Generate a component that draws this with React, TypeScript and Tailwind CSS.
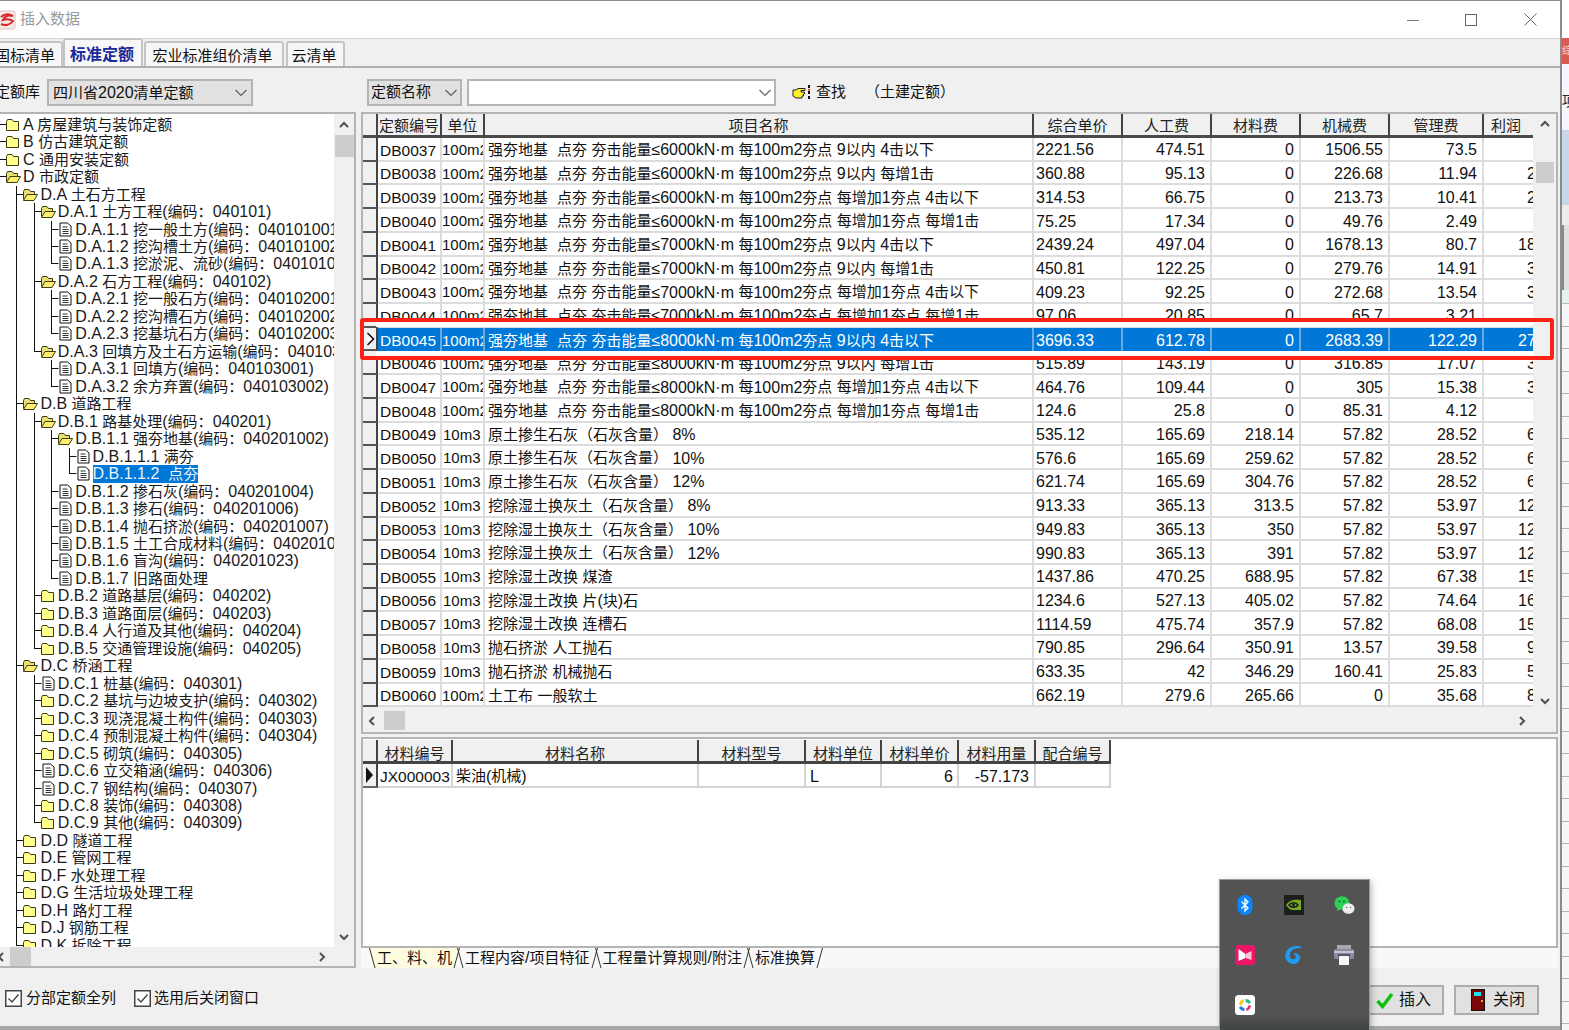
import React from "react";

const FONT = "[font-family:'Liberation_Sans','Noto_Sans_CJK_SC',sans-serif]";

function T({ s }: { s: string }) {
  return (
    <>
      {s
        .split(/([\x00-\x7f≤·]+)/)
        .filter(Boolean)
        .map((p, i) =>
          /^[\x00-\x7f≤·]/.test(p) ? (
            <span key={i} className="text-[16px]">
              {p}
            </span>
          ) : (
            <span key={i}>{p}</span>
          )
        )}
    </>
  );
}

type TreeRow = [number, "c" | "o" | "d", string];
const TREE: TreeRow[] = [
  [0, "c", "A 房屋建筑与装饰定额"],
  [0, "c", "B 仿古建筑定额"],
  [0, "c", "C 通用安装定额"],
  [0, "o", "D 市政定额"],
  [1, "o", "D.A 土石方工程"],
  [2, "o", "D.A.1 土方工程(编码：040101)"],
  [3, "d", "D.A.1.1 挖一般土方(编码：040101001)"],
  [3, "d", "D.A.1.2 挖沟槽土方(编码：040101002)"],
  [3, "d", "D.A.1.3 挖淤泥、流砂(编码：040101006)"],
  [2, "o", "D.A.2 石方工程(编码：040102)"],
  [3, "d", "D.A.2.1 挖一般石方(编码：040102001)"],
  [3, "d", "D.A.2.2 挖沟槽石方(编码：040102002)"],
  [3, "d", "D.A.2.3 挖基坑石方(编码：040102003)"],
  [2, "o", "D.A.3 回填方及土石方运输(编码：040103)"],
  [3, "d", "D.A.3.1 回填方(编码：040103001)"],
  [3, "d", "D.A.3.2 余方弃置(编码：040103002)"],
  [1, "o", "D.B 道路工程"],
  [2, "o", "D.B.1 路基处理(编码：040201)"],
  [3, "o", "D.B.1.1 强夯地基(编码：040201002)"],
  [4, "d", "D.B.1.1.1 满夯"],
  [4, "d", "D.B.1.1.2  点夯"],
  [3, "d", "D.B.1.2 掺石灰(编码：040201004)"],
  [3, "d", "D.B.1.3 掺石(编码：040201006)"],
  [3, "d", "D.B.1.4 抛石挤淤(编码：040201007)"],
  [3, "d", "D.B.1.5 土工合成材料(编码：040201010)"],
  [3, "d", "D.B.1.6 盲沟(编码：040201023)"],
  [3, "d", "D.B.1.7 旧路面处理"],
  [2, "c", "D.B.2 道路基层(编码：040202)"],
  [2, "c", "D.B.3 道路面层(编码：040203)"],
  [2, "c", "D.B.4 人行道及其他(编码：040204)"],
  [2, "c", "D.B.5 交通管理设施(编码：040205)"],
  [1, "o", "D.C 桥涵工程"],
  [2, "d", "D.C.1 桩基(编码：040301)"],
  [2, "c", "D.C.2 基坑与边坡支护(编码：040302)"],
  [2, "c", "D.C.3 现浇混凝土构件(编码：040303)"],
  [2, "c", "D.C.4 预制混凝土构件(编码：040304)"],
  [2, "c", "D.C.5 砌筑(编码：040305)"],
  [2, "d", "D.C.6 立交箱涵(编码：040306)"],
  [2, "d", "D.C.7 钢结构(编码：040307)"],
  [2, "c", "D.C.8 装饰(编码：040308)"],
  [2, "c", "D.C.9 其他(编码：040309)"],
  [1, "c", "D.D 隧道工程"],
  [1, "c", "D.E 管网工程"],
  [1, "c", "D.F 水处理工程"],
  [1, "c", "D.G 生活垃圾处理工程"],
  [1, "c", "D.H 路灯工程"],
  [1, "c", "D.J 钢筋工程"],
  [1, "c", "D.K 拆除工程"],
];

function continues(i: number, depth: number) {
  for (let j = i + 1; j < TREE.length; j++) {
    if (TREE[j][0] < depth) return false;
    if (TREE[j][0] === depth) return true;
  }
  return false;
}

function TreeLine({ i }: { i: number }) {
  const [lv, icon] = TREE[i];
  const vx = (d: number) => Math.round(-1 + 17.4 * d) + 0.5;
  const w = 23 + 17.4 * lv;
  const x = vx(lv);
  const els: React.ReactNode[] = [];
  for (let d = 1; d < lv; d++) {
    if (continues(i, d)) els.push(<line key={d} x1={vx(d)} x2={vx(d)} y1={0} y2={18} stroke="#111" />);
  }
  return (
    <svg width={w} height={18} className="shrink-0 overflow-visible">
      {els}
      <line x1={x} x2={x} y1={0} y2={continues(i, lv) ? 18 : 9} stroke="#111" />
      <line x1={x} x2={x + 7} y1={8.5} y2={8.5} stroke="#111" />
      {icon === "c" && (
        <g transform={`translate(${x + 6.5} 2)`}>
          <path d="M0.5 3.5 L1.5 1.5 H6 L7.5 3.5 H12.5 V12.5 H0.5 Z" fill="#ffff8c" stroke="#3c3c10" />
        </g>
      )}
      {icon === "o" && (
        <g transform={`translate(${x + 6.5} 2)`}>
          <path d="M0.5 11.5 V3.5 L1.5 1.5 H6 L7.5 3.5 H11.5 V6" fill="#e8e070" stroke="#3c3c10" />
          <path d="M0.5 12.5 L4 6.5 H14.5 L11 12.5 Z" fill="#ffee70" stroke="#3c3c10" />
        </g>
      )}
      {icon === "d" && (
        <g transform={`translate(${x + 8} 1.5)`}>
          <path d="M0.5 0.5 H8 L11.5 3.5 V13.5 H0.5 Z" fill="#fff" stroke="#111" />
          <path d="M3 4.5 H8 M3 7 H9 M3 9 H9 M3 11 H9" stroke="#333" />
        </g>
      )}
    </svg>
  );
}

const NAME = (e: string, tail: string) => `强夯地基  点夯 夯击能量≤${e}kN·m ${tail}`;
const A = "每100m2夯点 9以内 4击以下";
const B = "每100m2夯点 9以内 每增1击";
const C = "每100m2夯点 每增加1夯点 4击以下";
const D = "每100m2夯点 每增加1夯点 每增1击";
const S100 = "100m2";
const S10 = "10m3";

const ROWS: string[][] = [
  ["DB0037", S100, NAME("6000", A), "2221.56", "474.51", "0", "1506.55", "73.5", "  "],
  ["DB0038", S100, NAME("6000", B), "360.88", "95.13", "0", "226.68", "11.94", "26.53"],
  ["DB0039", S100, NAME("6000", C), "314.53", "66.75", "0", "213.73", "10.41", "23.13"],
  ["DB0040", S100, NAME("6000", D), "75.25", "17.34", "0", "49.76", "2.49", "5.53"],
  ["DB0041", S100, NAME("7000", A), "2439.24", "497.04", "0", "1678.13", "80.7", "183.37"],
  ["DB0042", S100, NAME("7000", B), "450.81", "122.25", "0", "279.76", "14.91", "33.89"],
  ["DB0043", S100, NAME("7000", C), "409.23", "92.25", "0", "272.68", "13.54", "30.76"],
  ["DB0044", S100, NAME("7000", D), "97.06", "20.85", "0", "65.7", "3.21", "7.3"],
  ["DB0045", S100, NAME("8000", A), "3696.33", "612.78", "0", "2683.39", "122.29", "277.87"],
  ["DB0046", S100, NAME("8000", B), "515.89", "143.19", "0", "316.85", "17.07", "38.78"],
  ["DB0047", S100, NAME("8000", C), "464.76", "109.44", "0", "305", "15.38", "34.94"],
  ["DB0048", S100, NAME("8000", D), "124.6", "25.8", "0", "85.31", "4.12", "9.37"],
  ["DB0049", S10, "原土掺生石灰（石灰含量） 8%", "535.12", "165.69", "218.14", "57.82", "28.52", "64.95"],
  ["DB0050", S10, "原土掺生石灰（石灰含量） 10%", "576.6", "165.69", "259.62", "57.82", "28.52", "64.95"],
  ["DB0051", S10, "原土掺生石灰（石灰含量） 12%", "621.74", "165.69", "304.76", "57.82", "28.52", "64.95"],
  ["DB0052", S10, "挖除湿土换灰土（石灰含量） 8%", "913.33", "365.13", "313.5", "57.82", "53.97", "122.91"],
  ["DB0053", S10, "挖除湿土换灰土（石灰含量） 10%", "949.83", "365.13", "350", "57.82", "53.97", "122.91"],
  ["DB0054", S10, "挖除湿土换灰土（石灰含量） 12%", "990.83", "365.13", "391", "57.82", "53.97", "122.91"],
  ["DB0055", S10, "挖除湿土改换 煤渣", "1437.86", "470.25", "688.95", "57.82", "67.38", "153.46"],
  ["DB0056", S10, "挖除湿土改换 片(块)石", "1234.6", "527.13", "405.02", "57.82", "74.64", "169.99"],
  ["DB0057", S10, "挖除湿土改换 连槽石", "1114.59", "475.74", "357.9", "57.82", "68.08", "155.05"],
  ["DB0058", S10, "抛石挤淤 人工抛石", "790.85", "296.64", "350.91", "13.57", "39.58", "90.15"],
  ["DB0059", S10, "抛石挤淤 机械抛石", "633.35", "42", "346.29", "160.41", "25.83", "58.82"],
  ["DB0060", S100, "土工布 一般软土", "662.19", "279.6", "265.66", "0", "35.68", "81.25"],
];

const HEAD = ["定额编号", "单位", "项目名称", "综合单价", "人工费", "材料费", "机械费", "管理费", "利润"];

function Chevron({ dir, className }: { dir: "u" | "d" | "l" | "r"; className?: string }) {
  const d = {
    u: "M2 8 L6 4 L10 8",
    d: "M2 4 L6 8 L10 4",
    l: "M8 2 L4 6 L8 10",
    r: "M4 2 L8 6 L4 10",
  }[dir];
  return (
    <svg width="12" height="12" viewBox="0 0 12 12" className={className}>
      <path d={d} fill="none" stroke="#505050" strokeWidth="2" />
    </svg>
  );
}

function SelChevron() {
  return (
    <svg width="14" height="8" viewBox="0 0 14 8" className="shrink-0">
      <path d="M1.5 1 L7 6.5 L12.5 1" fill="none" stroke="#606060" strokeWidth="1.2" />
    </svg>
  );
}

function UpperGrid() {
  return (
    <div className="flex flex-col h-[622px] border-x-2 border-t-2 border-b-2 border-[#b4b4b4] bg-[#f0f0f0]">
      <div className="flex h-[595px]">
        <div className="w-[1170px] overflow-hidden flex flex-col">
          <div className="grid grid-cols-[15px_64px_43px_549px_89px_89px_89px_89px_94px_90px] h-[24px] shrink-0 border-b-[3px] border-[#4a4a4a] bg-[#f0f0f0] text-[15px] text-[#222]">
            <div className="border-r-2 border-[#444]" />
            {HEAD.map((h) =>
              h === "利润" ? (
                <div key={h} className="flex items-center pl-[7px] pt-[1px] whitespace-nowrap">
                  {h}
                </div>
              ) : (
                <div key={h} className="border-r-2 border-[#444] flex items-center justify-center pt-[1px] whitespace-nowrap overflow-hidden">
                  {h}
                </div>
              )
            )}
          </div>
          {ROWS.map((r) => {
            const sel = r[0] === "DB0045";
            const cell = sel
              ? "border-r-2 border-[#6ea8dc] flex items-center pt-[3px] overflow-hidden whitespace-pre bg-[#0078d7] text-white"
              : "border-r-2 border-b-2 border-[#dcdcdc] flex items-center pt-[3px] overflow-hidden whitespace-pre bg-white text-[#111]";
            return (
              <div key={r[0]} className="grid grid-cols-[15px_64px_43px_549px_89px_89px_89px_89px_94px_90px] h-[23.72px] shrink-0 text-[15px]">
                <div className="border-r-2 border-b-2 border-r-[#444] border-b-[#555] bg-[#f0f0f0] flex items-center justify-end pr-px">
                  {sel && (
                    <svg width="9" height="14" viewBox="0 0 9 14">
                      <path d="M1.5 1 L7.5 7 L1.5 13" fill="#fff" stroke="#111" strokeWidth="1.6" />
                    </svg>
                  )}
                </div>
                <div className={`${cell} pl-[2px] [&>span]:text-[15.5px]`}>
                  <T s={r[0]} />
                </div>
                <div className={r[1] === S100 ? `${cell} pl-0 [&>span]:text-[15px]` : `${cell} pl-[1px] [&>span]:text-[15px]`}>
                  <T s={r[1]} />
                </div>
                <div className={`${cell} pl-[3px]`}>
                  <T s={r[2]} />
                </div>
                <div className={`${cell} pl-[2px]`}>
                  <T s={r[3]} />
                </div>
                {r.slice(4).map((v, i) => (
                  <div key={i} className={`${cell} justify-end pr-[5px]`}>
                    <T s={v} />
                  </div>
                ))}
              </div>
            );
          })}
        </div>
        <div className="flex-1 flex flex-col items-center bg-[#f0f0f0] pt-[4px]">
          <Chevron dir="u" />
          <div className="w-[18px] h-[21px] bg-[#cdcdcd] mt-[32px]" />
          <div className="flex-1" />
          <Chevron dir="d" className="mb-[2px]" />
        </div>
      </div>
      <div className="flex-1 flex items-center bg-[#f0f0f0] pl-[3px] pr-[28px]">
        <Chevron dir="l" />
        <div className="w-[21px] h-[19px] bg-[#cdcdcd] ml-[6px]" />
        <div className="flex-1" />
        <Chevron dir="r" />
      </div>
    </div>
  );
}

function LowerGrid() {
  const head = ["材料编号", "材料名称", "材料型号", "材料单位", "材料单价", "材料用量", "配合编号"];
  const cols = "grid grid-cols-[15px_75px_246px_107px_76px_77px_77px_75px] w-[748px]";
  const c = "border-r-2 border-b-2 border-[#d4d4d4] flex items-center pt-[3px] whitespace-nowrap overflow-hidden text-[#111]";
  return (
    <div className="flex-1 bg-white border-x-2 border-t-2 border-[#b4b4b4] pt-px">
      <div className={`${cols} h-[24px] border-b-[3px] border-[#444] bg-[#f0f0f0] text-[15px] text-[#222]`}>
        <div className="border-r-2 border-[#444]" />
        {head.map((h) => (
          <div key={h} className="border-r-2 border-[#444] flex items-center justify-center pt-[3px] whitespace-nowrap">
            {h}
          </div>
        ))}
      </div>
      <div className={`${cols} h-[24px] text-[15px]`}>
        <div className="border-r-2 border-b-2 border-r-[#444] border-b-[#666] bg-[#f0f0f0] flex items-center justify-center">
          <svg width="9" height="16" viewBox="0 0 9 16">
            <path d="M1 0 L8 8 L1 16 Z" fill="#111" />
          </svg>
        </div>
        <div className={`${c} pl-[2px] text-[15.5px]`}>JX000003</div>
        <div className={`${c} pl-[3px]`}>
          <T s="柴油(机械)" />
        </div>
        <div className={c} />
        <div className={`${c} pl-[4px]`}>
          <T s="L" />
        </div>
        <div className={`${c} justify-end pr-[4px]`}>
          <T s="6" />
        </div>
        <div className={`${c} justify-end pr-[5px]`}>
          <T s="-57.173" />
        </div>
        <div className={c} />
      </div>
    </div>
  );
}

function Slant({ back, active }: { back?: boolean; active?: boolean }) {
  return (
    <svg width="7" height="20" viewBox="0 0 7 20" className="shrink-0">
      {active && <path d={back ? "M0 0 H7 V20 H6 Z" : "M0 0 H7 L1 20 H0 Z"} fill="#fffbdf" />}
      <path d={back ? "M0.5 0 L6 20" : "M6.5 0 L1 20"} fill="none" stroke="#333" strokeWidth="1" />
    </svg>
  );
}

function BottomTabs() {
  const tabs = ["工、料、机", "工程内容/项目特征", "工程量计算规则/附注", "标准换算"];
  return (
    <div className="h-[22px] bg-[#f8f8f8] flex items-start pl-[8px] border-t-2 border-[#b4b4b4] text-[15px] text-[#111]">
      {tabs.map((t, i) => (
        <div key={t} className={i === 0 ? "flex items-center h-[20px]" : "flex items-center h-[20px] -ml-[3px]"}>
          <Slant back active={i === 0} />
          <div className={i === 0 ? "bg-[#fffbdf] px-[1px] whitespace-nowrap leading-[20px]" : "px-[1px] whitespace-nowrap leading-[20px]"}>
            <T s={t} />
          </div>
          <Slant active={i === 0} />
        </div>
      ))}
    </div>
  );
}

function Tray() {
  return (
    <div className="absolute left-[1219px] top-[879px] w-[151px] h-[151px] border border-b-0 border-[#9a9a9a] bg-gradient-to-b from-[#535353] from-90% to-[#3f4444] shadow-[2px_2px_6px_rgba(0,0,0,0.25)] grid grid-cols-3 grid-rows-3 place-items-center">
      <svg width="16" height="20" viewBox="0 0 16 20">
        <rect x="0.5" y="0" width="15" height="20" rx="7" fill="#0a84ff" />
        <path d="M4.5 6.5 L11 13 L8 16 V4 L11 7 L4.5 13.5" fill="none" stroke="#fff" strokeWidth="1.3" />
      </svg>
      <svg width="20" height="20" viewBox="0 0 20 20">
        <rect width="20" height="20" fill="#1c1f1c" />
        <path d="M2 10 C5 5 10 4 17 5 V15 H9 C6 15 4 13 2 10 Z" fill="#76a928" />
        <path d="M5 10 C7 7 12 7 14 10 C12 13 7 13 5 10 Z" fill="none" stroke="#1c1f1c" strokeWidth="1.5" />
        <circle cx="9.5" cy="10" r="1.5" fill="#1c1f1c" />
      </svg>
      <svg width="21" height="19" viewBox="0 0 21 19">
        <ellipse cx="8" cy="7" rx="7.5" ry="6.8" fill="#2fd058" />
        <path d="M3.5 11 L3 15 L7 13 Z" fill="#2fd058" />
        <ellipse cx="14.5" cy="12.5" rx="6" ry="5.3" fill="#eeeeee" />
        <circle cx="5.5" cy="5.5" r="1" fill="#136a2c" />
        <circle cx="10" cy="5.5" r="1" fill="#136a2c" />
        <circle cx="12.5" cy="11.5" r="0.8" fill="#777" />
        <circle cx="16.5" cy="11.5" r="0.8" fill="#777" />
      </svg>
      <svg width="20" height="20" viewBox="0 0 20 20">
        <rect width="20" height="20" rx="3.5" fill="#ee1566" />
        <path d="M3.5 4 L10.5 9 V13 L3.5 16 Z" fill="#fff" />
        <path d="M10.5 9 L16.5 6 V15 L10.5 13 Z" fill="#fbc6d8" />
      </svg>
      <svg width="20" height="20" viewBox="0 0 20 20">
        <path d="M16.5 1.5 C11 0 3 2 1.5 9 C0.5 14 4 18.5 9 19 C13 19.5 16 16 16 12.5 C16 9.5 13 7.5 9.5 8.5 L12 11.5 C12 14 9 15 7 13.5 C4.5 11.5 5.5 6 10 4 C12.5 3 15 3 18 3 Z" fill="#1e9cf0" />
      </svg>
      <svg width="20" height="20" viewBox="0 0 20 20">
        <rect x="3" y="0" width="14" height="4" fill="#a9a9b4" />
        <rect x="0" y="4" width="20" height="10" rx="2" fill="#8c8ca0" />
        <rect x="0" y="6" width="20" height="2" fill="#c4c4cc" />
        <rect x="4" y="9" width="12" height="4" fill="#55556a" />
        <rect x="5" y="11" width="10" height="9" fill="#f5f5f5" />
      </svg>
      <svg width="20" height="20" viewBox="0 0 20 20">
        <rect width="20" height="20" rx="3.5" fill="#fff" />
        <path d="M4 10 C4 7 6 4.5 8.5 4 L9 7 C7.5 7.5 7 9 7 10 Z" fill="#ffc61a" />
        <path d="M10.5 4 C13 4 15 5 16 7.5 L13.5 9 C13 8 12 7 10.5 7 Z" fill="#22c08a" />
        <path d="M16 10.5 C16 13 14 15.5 11.5 16 L11 13.5 C12.5 13 13 12 13 10.5 Z" fill="#f0335a" />
        <path d="M9.5 16 C7 16 5 15 4 12.5 L6.5 11 C7 12 8 13 9.5 13 Z" fill="#1e7cf0" />
      </svg>
      <div />
      <div />
    </div>
  );
}

function SideStrip() {
  return (
    <div className="flex-1 flex flex-col overflow-hidden">
      <div className="h-[38px] bg-white shrink-0" />
      <div className="h-[26px] bg-[#d85a50] shrink-0 text-[10px] text-[#fbd9d0] overflow-hidden leading-[26px]">综</div>
      <div className="h-[66px] bg-[#f4f8fc] shrink-0 text-[14px] text-[#222] pt-[30px] leading-[14px] whitespace-nowrap">项</div>
      <div className="h-[75px] bg-[#c8d8e8] shrink-0" />
      <div className="h-[20px] bg-[#ececec] shrink-0" />
      <div className="h-[65px] bg-[#e0e0e0] shrink-0 border-l-2 border-[#888]" />
      <div className="h-[14px] bg-[#e2f2ee] shrink-0 border-b border-[#b8b8b8]" />
      {Array.from({ length: 33 }, (_, i) => (
        <div key={i} className="h-[22.5px] shrink-0 bg-[#f6f6f6] border-b border-[#b4b4b4]" />
      ))}
    </div>
  );
}

export default function App() {
  return (
    <div className={`${FONT} relative w-[1569px] h-[1030px] flex overflow-hidden bg-white text-[15px] text-[#111]`}>
      <div className="w-[1562px] h-full flex flex-col bg-[#f0f0f0] border-t border-r-2 border-[#8c8c8c] shrink-0">
        {/* title */}
        <div className="h-[38px] shrink-0 bg-white flex items-center border-b border-[#d4d4d4]">
          <svg width="16" height="20" viewBox="0 0 16 20" className="shrink-0">
            <rect x="-2" y="1" width="17" height="18" rx="2" fill="#f6e9e6" stroke="#d8c4bc" />
            <path d="M1 7 C5 3 10 4 13 6 C9 5 5 6 3 10 C6 9 10 9 13 11 C10 15 5 16 1 14" fill="none" stroke="#d8262a" strokeWidth="2" />
          </svg>
          <span className="ml-[4px] text-[#9a9a9a]">插入数据</span>
          <div className="flex-1" />
          <svg width="12" height="2" className="mr-[46px] mt-[2px]">
            <rect width="12" height="1" fill="#777" />
          </svg>
          <svg width="12" height="12" className="mr-[47px]">
            <rect x="0.5" y="0.5" width="11" height="11" fill="none" stroke="#666" />
          </svg>
          <svg width="13" height="13" className="mr-[23px]">
            <path d="M0.5 0.5 L12.5 12.5 M12.5 0.5 L0.5 12.5" stroke="#666" />
          </svg>
        </div>
        {/* tabs */}
        <div className="h-[29px] shrink-0 flex items-end border-b-2 border-[#b0b0b0]">
          <div className="w-[72px] -ml-[9px] h-[25px] bg-[#f6f6f6] border-2 border-b-0 border-[#c4c4c4] rounded-t-[3px] flex items-center justify-end pr-[6px] pt-[3px] whitespace-nowrap">
            国标清单
          </div>
          <div className="w-[80px] h-[28px] bg-[#f8f8f8] border-2 border-b-0 border-[#c4c4c4] rounded-t-[3px] flex items-center justify-center pr-[2px] pt-[4px] font-bold text-[16px] text-[#1a2a9c] whitespace-nowrap">
            标准定额
          </div>
          <div className="w-[140px] ml-px h-[25px] bg-[#f6f6f6] border-2 border-b-0 border-[#c4c4c4] rounded-t-[3px] flex items-center justify-center pr-[3px] pt-[3px] whitespace-nowrap">
            宏业标准组价清单
          </div>
          <div className="w-[59px] ml-[2px] h-[25px] bg-[#f6f6f6] border-2 border-b-0 border-[#c4c4c4] rounded-t-[3px] flex items-center justify-center pr-[3px] pt-[3px] whitespace-nowrap">
            云清单
          </div>
        </div>
        {/* toolbar */}
        <div className="h-[44px] shrink-0 flex items-center pt-[5px]">
          <span className="-ml-[5px] w-[52px] shrink-0 whitespace-nowrap">定额库</span>
          <div className="w-[206px] h-[27px] bg-[#e1e1e1] border-2 border-[#b4b4b4] flex items-center pl-[4px] pr-[3px] justify-between">
            <span>
              <T s="四川省2020清单定额" />
            </span>
            <SelChevron />
          </div>
          <div className="w-[95px] h-[27px] ml-[114px] bg-[#e1e1e1] border-2 border-[#b4b4b4] flex items-center pl-[2px] pr-[2px] justify-between">
            <span>定额名称</span>
            <SelChevron />
          </div>
          <div className="w-[309px] h-[27px] ml-[5px] bg-white border-2 border-[#b4b4b4] flex items-center justify-end pr-[2px]">
            <SelChevron />
          </div>
          <svg width="19" height="16" viewBox="0 0 19 16" className="ml-[16px]">
            <path d="M1 5 H4 L6 3.5 H13 V5.5 H9 V7 H12.5 V9 H11.5 V11 H10 V13 H4 L1 11 Z" fill="#fff030" stroke="#222" />
            <path d="M17 0 V3 M17 6 V9 M17 11 V14" stroke="#111" strokeWidth="2" />
            <rect x="16" y="4" width="2" height="1.5" fill="#e01010" />
          </svg>
          <span className="ml-[5px]">查找</span>
          <span className="ml-[19px]">（土建定额）</span>
        </div>
        {/* body */}
        <div className="h-[856px] shrink-0 flex">
          <div className="w-[356px] shrink-0 flex flex-col border-y-2 border-r-2 border-[#b4b4b4] bg-[#f0f0f0]">
            <div className="h-[833px] flex shrink-0">
              <div className="w-[334px] bg-white overflow-hidden pt-[2px] shrink-0">
                {TREE.map((r, i) => {
                  const sel = r[2].startsWith("D.B.1.1.2");
                  return (
                    <div key={i} className="h-[17.47px] flex items-center whitespace-pre">
                      <TreeLine i={i} />
                      <span className={sel ? "bg-[#0078d7] text-[#e8f2fc] h-[18px] leading-[18px]" : "h-[18px] leading-[18px] text-[#1a1a1a]"}>
                        <T s={r[2]} />
                      </span>
                    </div>
                  );
                })}
              </div>
              <div className="flex-1 flex flex-col items-center pt-[5px]">
                <Chevron dir="u" />
                <div className="w-[19px] h-[22px] bg-[#cdcdcd] mt-[4px]" />
                <div className="flex-1" />
                <Chevron dir="d" className="mb-[4px]" />
              </div>
            </div>
            <div className="flex-1 flex items-center">
              <div className="w-[10px] shrink-0 overflow-hidden">
                <Chevron dir="l" className="-ml-[5px]" />
              </div>
              <div className="w-[21px] h-[19px] bg-[#cdcdcd] shrink-0" />
              <div className="flex-1" />
              <Chevron dir="r" className="mr-[26px]" />
            </div>
          </div>
          <div className="w-[1197px] ml-[5px] shrink-0 flex flex-col">
            <UpperGrid />
            <div className="h-[3px] shrink-0" />
            <LowerGrid />
            <BottomTabs />
          </div>
        </div>
        {/* footer */}
        <div className="flex-1 flex items-center bg-[#f0f0f0] pl-[5px] border-b-[4px] border-[#a8a8a8]">
          {["分部定额全列", "选用后关闭窗口"].map((t, i) => (
            <label key={t} className={i === 0 ? "flex items-center gap-[4px] w-[129px] mt-[2px] whitespace-nowrap" : "flex items-center gap-[3px] mt-[2px] whitespace-nowrap"}>
              <svg width="17" height="17" viewBox="0 0 17 17" className="shrink-0">
                <rect x="0.75" y="0.75" width="15.5" height="15.5" fill="#fff" stroke="#444" strokeWidth="1.5" />
                <path d="M3.5 8.5 L7 12 L13.5 4.5" fill="none" stroke="#444" strokeWidth="1.4" />
              </svg>
              {t}
            </label>
          ))}
          <div className="flex-1" />
          <div className="w-[86px] h-[30px] mt-[6px] bg-[#e1e1e1] border-2 border-[#adadad] flex items-center justify-end pr-[11px] gap-[5px] text-[16px]">
            <svg width="18" height="17" viewBox="0 0 18 17">
              <path d="M1.5 9 L6.5 14.5 L16 2" fill="none" stroke="#10c010" strokeWidth="3.5" />
            </svg>
            插入
          </div>
          <div className="w-[85px] h-[30px] mt-[6px] ml-[10px] mr-[21px] bg-[#e1e1e1] border-2 border-[#adadad] flex items-center pl-[15px] gap-[8px] text-[16px]">
            <svg width="14" height="22" viewBox="0 0 14 22">
              <rect width="14" height="22" fill="#111" />
              <rect x="1" y="1" width="12" height="20" fill="#7a0a0a" />
              <rect x="3" y="3" width="7" height="4" fill="#20e0f0" />
              <rect x="10" y="11" width="2" height="2" fill="#e0a020" />
            </svg>
            关闭
          </div>
        </div>
      </div>
      <SideStrip />
      {/* red annotation over the selected row */}
      <div className="absolute left-[360px] top-[318px] w-[1194px] h-[42px] border-[4px] border-[#ff2016] rounded-[3px] flex flex-col justify-between">
        <div className="h-[5px] bg-white ml-[12px] mr-[20px]" />
        <div className="h-[5px] bg-white ml-[12px] mr-[20px]" />
      </div>
      <Tray />
    </div>
  );
}
